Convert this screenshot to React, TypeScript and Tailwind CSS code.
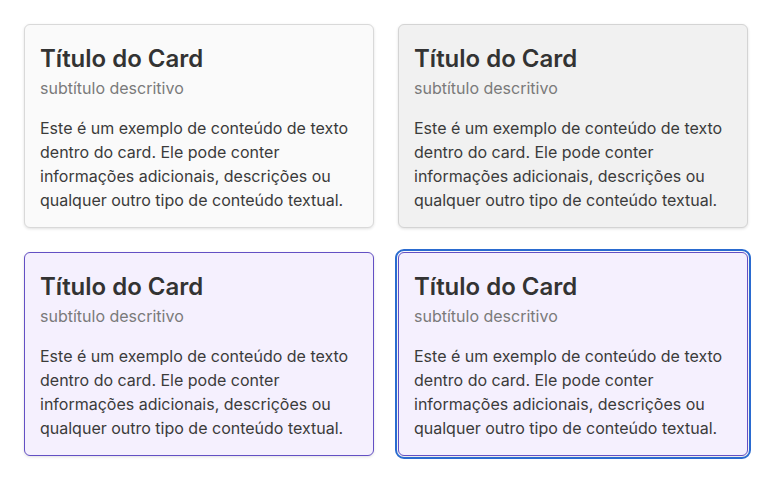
import React from "react";

type Variant = "plain" | "gray" | "purple" | "focus";

const cls: Record<Variant, string> = {
  plain: "bg-[#fafafa] border-[#d9d9d9]",
  gray: "bg-[#f1f1f1] border-[#d4d4d4]",
  purple: "bg-[#f5f0fe] border-[#6350c4]",
  focus: "bg-[#f5f0fe] border-[#6350c4] outline-2 outline-offset-1 outline-[#2a6bd0]",
};

function Card({ v }: { v: Variant }) {
  return (
    <div
      className={`rounded-[6px] border px-[15px] pt-[18px] pb-[15px] shadow-[0_1px_3px_rgba(0,0,0,0.12)] ${cls[v]}`}
    >
      <h2 className="text-[24px] leading-[32px] font-semibold text-[#333333]">Título do Card</h2>
      <p className="text-[16px] leading-[24px] text-[#7a7a7a] mt-[1px]">subtítulo descritivo</p>
      <p className="text-[16px] leading-[24px] text-[#3b3b3b] mt-4">
        Este é um exemplo de conteúdo de texto dentro do card. Ele pode conter informações adicionais, descrições ou
        qualquer outro tipo de conteúdo textual.
      </p>
    </div>
  );
}

export default function App() {
  return (
    <div className="w-[772px] h-[480px] bg-white p-6" style={{ fontFamily: "Inter, 'Noto Sans', sans-serif" }}>
      <div className="grid grid-cols-2 gap-6">
        <Card v="plain" />
        <Card v="gray" />
        <Card v="purple" />
        <Card v="focus" />
      </div>
    </div>
  );
}
